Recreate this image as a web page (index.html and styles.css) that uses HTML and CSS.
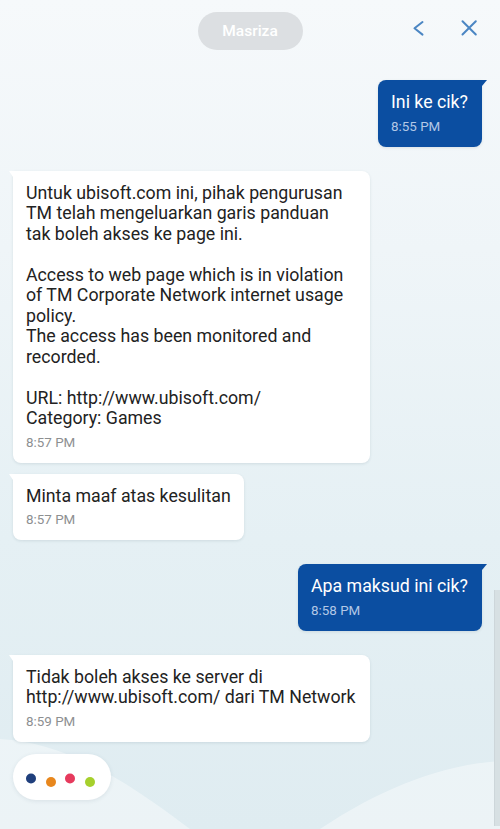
FILE: index.html
```html
<!DOCTYPE html>
<html lang="ms">
<head>
    <meta charset="UTF-8">
    <meta name="viewport" content="width=device-width, initial-scale=1.0">
    <title>Masriza</title>
    <link rel="stylesheet" href="styles.css">
</head>
<body>
    <div class="screen">
        <svg class="waves" viewBox="0 0 500 130" preserveAspectRatio="none" aria-hidden="true">
            <path d="M0 40 C 70 44, 130 85, 190 130 L0 130 Z" fill="#ffffff" fill-opacity="0.4"/>
            <path d="M320 130 C 380 90, 440 66, 500 62 L500 130 Z" fill="#ffffff" fill-opacity="0.4"/>
        </svg>

        <header class="topbar">
            <div></div>
            <div class="contact">Masriza</div>
            <div class="actions">
                <button class="icon-btn" aria-label="Back">
                    <svg width="24" height="24" viewBox="0 0 24 24"><path d="M16.5 6 L8.5 12.3 L16.5 18.6" fill="none" stroke="#4b86c3" stroke-width="2" stroke-linecap="round" stroke-linejoin="round"/></svg>
                </button>
                <button class="icon-btn" aria-label="Close">
                    <svg width="24" height="24" viewBox="0 0 24 24"><path d="M5.5 5.2 L18.8 18.5 M18.8 5.2 L5.5 18.5" fill="none" stroke="#4b86c3" stroke-width="2" stroke-linecap="round"/></svg>
                </button>
            </div>
        </header>

        <main class="chat">
            <div class="msg sent first">
                <p class="text">Ini ke cik?</p>
                <span class="time">8:55 PM</span>
            </div>

            <div class="msg received new-group">
                <p class="text">Untuk ubisoft.com ini, pihak pengurusan TM telah mengeluarkan garis panduan tak boleh akses ke page ini.

Access to web page which is in violation of TM Corporate Network internet usage policy.
The access has been monitored and recorded.

URL: http://www.ubisoft.com/
Category: Games</p>
                <span class="time">8:57 PM</span>
            </div>

            <div class="msg received">
                <p class="text">Minta maaf atas kesulitan</p>
                <span class="time">8:57 PM</span>
            </div>

            <div class="msg sent new-group">
                <p class="text">Apa maksud ini cik?</p>
                <span class="time">8:58 PM</span>
            </div>

            <div class="msg received new-group">
                <p class="text">Tidak boleh akses ke server di http://www.ubisoft.com/ dari TM Network</p>
                <span class="time">8:59 PM</span>
            </div>

            <div class="typing">
                <span class="dot dot-navy"></span>
                <span class="dot dot-orange"></span>
                <span class="dot dot-red"></span>
                <span class="dot dot-lime"></span>
            </div>
        </main>

        <div class="scrollbar"></div>
    </div>
</body>
</html>
```

FILE: styles.css
```css
* {
    margin: 0;
    padding: 0;
    box-sizing: border-box;
}

body {
    font-family: Roboto, "Noto Sans", Arial, sans-serif;
    background: #eef5f8;
}

.screen {
    position: relative;
    width: 500px;
    height: 829px;
    overflow: hidden;
    background: linear-gradient(180deg, #f6f9fb 0%, #eff5f8 30%, #e5f0f4 65%, #dfecf1 100%);
}

.waves {
    position: absolute;
    left: 0;
    bottom: 0;
    width: 500px;
    height: 130px;
}

.topbar {
    position: relative;
    display: grid;
    grid-template-columns: 1fr auto 1fr;
    align-items: center;
    padding-top: 12px;
}

.contact {
    width: 105px;
    height: 38px;
    border-radius: 19px;
    background: #dcdfe2;
    color: #ffffff;
    font-size: 15.5px;
    font-weight: 500;
    display: flex;
    align-items: center;
    justify-content: center;
}

.actions {
    display: flex;
    justify-content: flex-end;
    gap: 27px;
    padding-right: 19px;
    margin-bottom: 6px;
}

.icon-btn {
    width: 24px;
    height: 24px;
    border: none;
    background: none;
    display: flex;
}

.chat {
    position: relative;
    display: flex;
    flex-direction: column;
    padding: 0 18px 0 13px;
}

.msg {
    position: relative;
    max-width: 357px;
    padding: 12px 13px 12px 13px;
    border-radius: 8px;
    margin-top: 11px;
    box-shadow: 0 1px 3px rgba(40, 70, 90, 0.12);
}

.msg.first {
    margin-top: 30px;
}

.msg.new-group {
    margin-top: 24px;
}

.text {
    font-size: 17.75px;
    line-height: 20.5px;
    white-space: pre-line;
}

.time {
    display: block;
    margin-top: 6px;
    font-size: 13.4px;
    line-height: 16px;
}

.received {
    align-self: flex-start;
    background: #ffffff;
    color: #222222;
    border-top-left-radius: 0;
}

.received::before {
    content: "";
    position: absolute;
    left: -4px;
    top: 0;
    border-top: 6px solid #ffffff;
    border-left: 4px solid transparent;
}

.received .time {
    color: #8d8f91;
}

.sent {
    align-self: flex-end;
    background: #0b4ea1;
    color: #ffffff;
    border-top-right-radius: 0;
    padding-right: 14px;
}

.sent::after {
    content: "";
    position: absolute;
    right: -5px;
    top: 0;
    border-top: 6px solid #0b4ea1;
    border-right: 5px solid transparent;
}

.sent .time {
    color: #b3c8e6;
}

.typing {
    align-self: flex-start;
    display: flex;
    align-items: center;
    gap: 9.5px;
    height: 46px;
    margin-top: 12px;
    padding: 0 16px 0 13px;
    border-radius: 23px;
    background: #ffffff;
    box-shadow: 0 1px 4px rgba(40, 70, 90, 0.1);
}

.dot {
    width: 10px;
    height: 10px;
    border-radius: 50%;
    transform: translateY(1.5px);
}

.dot:nth-child(even) {
    transform: translateY(5px);
}

.dot-navy {
    background: #1f3f7c;
}

.dot-orange {
    background: #e8871d;
}

.dot-red {
    background: #e63a5d;
}

.dot-lime {
    background: #a6d02c;
}

.scrollbar {
    position: absolute;
    right: 0;
    top: 590px;
    width: 6px;
    height: 236px;
    background: #d7e0e3;
    border-left: 1px solid #cdd6da;
}
```
